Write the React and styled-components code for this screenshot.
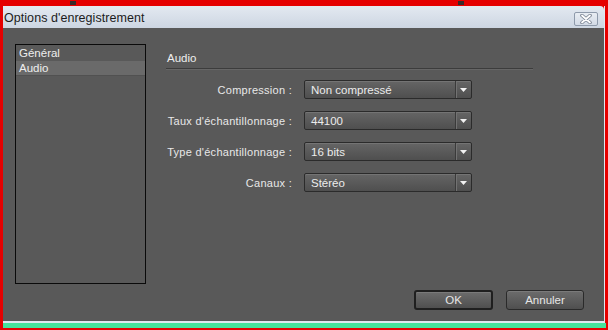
import React from "react";
import styled, { createGlobalStyle } from "styled-components";

const Global = createGlobalStyle`
  html, body { margin: 0; padding: 0; background: #e00000; }
  body { font-family: "Liberation Sans", Arial, sans-serif; }
`;

const Frame = styled.div`
  width: 608px;
  height: 330px;
  box-sizing: border-box;
  background: #e50000;
  padding: 6px 2px 0 3px;
  display: flex;
  flex-direction: column;
  position: relative;
  overflow: hidden;
`;

const Mark = styled.span`
  position: absolute;
  top: 1px;
  left: ${(p) => p.x}px;
  width: 6px;
  height: 4px;
  background: #3a2a2a;
`;

const Window = styled.div`
  display: flex;
  flex-direction: column;
  height: 317px;
  flex: none;
  box-sizing: border-box;
  border-right: 1px solid #dfe7f0;
  border-bottom: 2px solid #dfe7f0;
  margin-right: 1px;
`;

const TitleBar = styled.div`
  height: 22px;
  flex: none;
  display: flex;
  align-items: center;
  justify-content: space-between;
  background: linear-gradient(#e3e9f1, #cdd6e2);
  padding: 0 6px 0 0;
  border-top-right-radius: 4px;
`;

const Title = styled.span`
  font-size: 12.5px;
  color: #1c1c1c;
  padding-left: 1px;
  padding-top: 2px;
  letter-spacing: 0.05px;
`;

const CloseBtn = styled.div`
  width: 24px;
  height: 14px;
  box-sizing: border-box;
  border: 1px solid #8e9aab;
  border-radius: 2px;
  background: linear-gradient(#e8edf3, #d3dbe6);
  display: flex;
  align-items: center;
  justify-content: center;
  margin-top: 4px;
`;

const Body = styled.div`
  flex: 1;
  background: #595959;
  display: flex;
  flex-direction: column;
  padding: 16px 20px 0 12px;
  color: #ececec;
  font-size: 11px;
`;

const Main = styled.div`
  display: flex;
  gap: 20px;
`;

const List = styled.div`
  width: 131px;
  height: 240px;
  box-sizing: border-box;
  border: 1px solid #0a0a0a;
  display: flex;
  flex-direction: column;
  padding-top: 1px;
`;

const ListItem = styled.div`
  height: 14px;
  line-height: 14px;
  padding-left: 3px;
  font-size: 11.5px;
  color: #eeeeee;
  background: ${(p) => (p.selected ? "#6a6a6a" : "transparent")};
  border-bottom: 1px solid ${(p) => (p.selected ? "#515151" : "transparent")};
`;

const Panel = styled.div`
  flex: 1;
  display: flex;
  flex-direction: column;
  padding-right: 51px;
`;

const SectionTitle = styled.div`
  font-size: 11.5px;
  color: #eeeeee;
  padding: 8px 0 4px 1px;
  border-bottom: 1px solid #3c3c3c;
  box-shadow: 0 1px 0 #666;
`;

const Rows = styled.div`
  display: grid;
  grid-template-columns: 126px 168px;
  column-gap: 12px;
  row-gap: 12px;
  margin-top: 11px;
  align-items: center;
`;

const Label = styled.div`
  text-align: right;
  font-size: 11px;
  letter-spacing: 0.27px;
  color: #e8e8e8;
  white-space: nowrap;
`;

const Select = styled.div`
  height: 19px;
  box-sizing: border-box;
  border: 1px solid #2b2b2b;
  border-radius: 2px;
  background: linear-gradient(#656565, #4f4f4f);
  box-shadow: inset 0 1px 0 #747474;
  display: flex;
  align-items: center;
  font-size: 11.5px;
  color: #ececec;
`;

const SelectText = styled.span`
  flex: 1;
  padding-left: 6px;
`;

const ArrowBox = styled.span`
  width: 15px;
  height: 100%;
  display: flex;
  align-items: center;
  justify-content: center;
  border-left: 1px solid #3a3a3a;
  box-shadow: inset 1px 0 0 #727272;
`;

const Footer = styled.div`
  display: flex;
  justify-content: flex-end;
  gap: 13px;
  margin-top: 6px;
`;

const Button = styled.div`
  width: ${(p) => p.w}px;
  height: 20px;
  box-sizing: border-box;
  border: ${(p) => (p.primary ? "2px solid #1f1f1f" : "1px solid #2a2a2a")};
  border-radius: 3px;
  background: linear-gradient(#6c6c6c, #4f4f4f);
  box-shadow: inset 0 1px 0 #7a7a7a;
  display: flex;
  align-items: center;
  justify-content: center;
  font-size: 11.5px;
  color: #e6e6e6;
`;

const Bottom = styled.div`
  height: 5px;
  flex: none;
  background: #46e39c;
`;

const Arrow = () => (
  <svg width="9" height="6" viewBox="0 0 9 6">
    <path d="M1 1 L8 1 L4.5 5 Z" fill="#f2f2f2" />
  </svg>
);

const CloseIcon = () => (
  <svg width="14" height="10" viewBox="0 0 14 10">
    <path d="M3 1.5 L11 8.5 M11 1.5 L3 8.5" stroke="#7b8594" strokeWidth="3.6" strokeLinecap="round" />
    <path d="M3 1.5 L11 8.5 M11 1.5 L3 8.5" stroke="#ffffff" strokeWidth="1.8" strokeLinecap="round" />
  </svg>
);

const rows = [
  ["Compression :", "Non compressé"],
  ["Taux d'échantillonnage :", "44100"],
  ["Type d'échantillonnage :", "16 bits"],
  ["Canaux :", "Stéréo"],
];

export default function App() {
  return (
    <>
      <Global />
      <Frame>
        <Mark x={70} />
        <Mark x={458} />
        <Window>
          <TitleBar>
            <Title>Options d'enregistrement</Title>
            <CloseBtn>
              <CloseIcon />
            </CloseBtn>
          </TitleBar>
          <Body>
            <Main>
              <List>
                <ListItem>Général</ListItem>
                <ListItem selected>Audio</ListItem>
              </List>
              <Panel>
                <SectionTitle>Audio</SectionTitle>
                <Rows>
                  {rows.map(([l, v]) => (
                    <React.Fragment key={l}>
                      <Label>{l}</Label>
                      <Select>
                        <SelectText>{v}</SelectText>
                        <ArrowBox>
                          <Arrow />
                        </ArrowBox>
                      </Select>
                    </React.Fragment>
                  ))}
                </Rows>
              </Panel>
            </Main>
            <Footer>
              <Button primary w={79}>OK</Button>
              <Button w={78}>Annuler</Button>
            </Footer>
          </Body>
        </Window>
        <Bottom />
      </Frame>
    </>
  );
}
